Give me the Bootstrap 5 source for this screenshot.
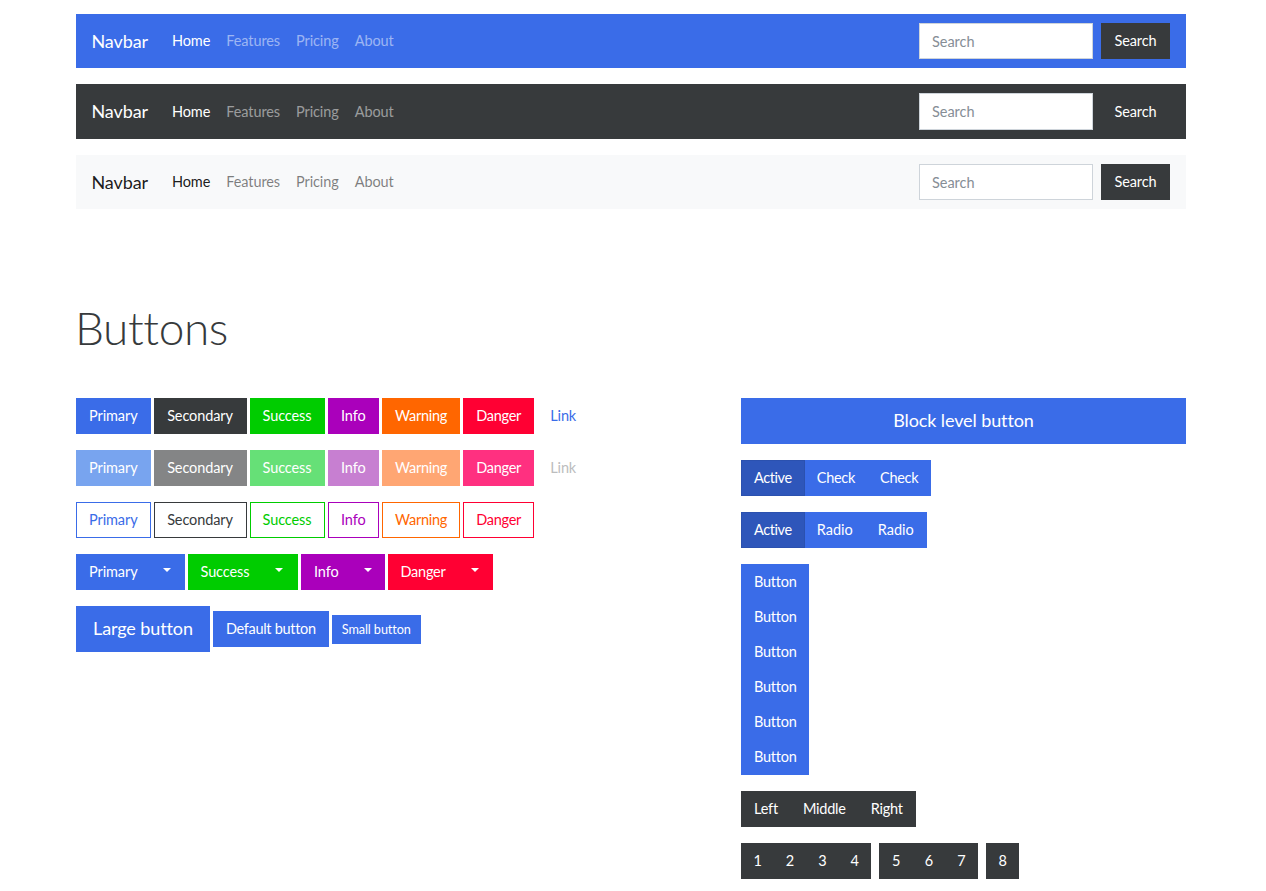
<!DOCTYPE html>
<html lang="en"><head><meta charset="utf-8"><title>Buttons</title>
<link href="https://cdn.jsdelivr.net/npm/bootstrap@5.3.0/dist/css/bootstrap.min.css" rel="stylesheet">
<style>
:root{--bs-primary-rgb:58,108,232;--bs-light-rgb:248,249,250;--bs-dark-rgb:55,58,60;--bs-border-radius:0;--bs-border-radius-sm:0;--bs-border-radius-lg:0;--bs-body-font-family:"Lato",sans-serif;--bs-body-color:#373a3c}
body{font-family:"Lato",sans-serif;font-size:14.5px;letter-spacing:-.1px;color:#373a3c}
.shell{width:1140px;max-width:none;margin-left:61px;padding:13.75px 15px 0}
.shell .navbar{padding:9px 16px;margin-bottom:16px}
.navbar-brand{font-size:18px;padding:0;margin-right:16px;margin-left:-.5px}
.navbar .nav-link{font-size:14.5px;padding:0 8px;line-height:22px}
.navbar-dark .navbar-nav .nav-link{--bs-nav-link-color:rgba(255,255,255,.5);color:rgba(255,255,255,.5)}
.navbar-dark .navbar-nav .nav-link.active{color:#fff}
.navbar-light .navbar-nav .nav-link{color:rgba(0,0,0,.5)}
.navbar-light .navbar-nav .nav-link.active{color:rgba(0,0,0,.9)}
.navbar-light .navbar-brand{color:rgba(0,0,0,.9)}
.navbar .form-control{width:174px;padding:7px 12px 5px;font-size:14.5px;line-height:22.5px;border-radius:0;border-color:#ced4da}
.navbar .form-control::placeholder{color:#868e96}
.navbar .btn{margin-left:8px;padding:0 12.5px;display:flex;align-items:center}
.section-title{font-size:46px;font-weight:300;line-height:1.2;color:#373a3c;letter-spacing:-.4px;margin:91.15px 0 42.4px -1px}
.gallery{--bs-gutter-x:30px}
.btn{--bs-btn-padding-x:12px;--bs-btn-padding-y:6px;--bs-btn-font-size:14.5px;--bs-btn-line-height:22px;--bs-btn-border-radius:0;--bs-btn-color:#fff;--bs-btn-hover-color:#fff;--bs-btn-active-color:#fff;--bs-btn-disabled-color:#fff;--bs-btn-disabled-opacity:1;letter-spacing:-.1px}
.btn-lg{--bs-btn-padding-x:16px;--bs-btn-font-size:18px;--bs-btn-line-height:28px;padding-top:7.5px;padding-bottom:8.5px}
.btn-sm{--bs-btn-padding-x:9px;--bs-btn-padding-y:4px;--bs-btn-font-size:12.7px;--bs-btn-line-height:19px}
.btn-primary{--bs-btn-bg:#3a6ce8;--bs-btn-border-color:#3a6ce8;--bs-btn-hover-bg:#3a6ce8;--bs-btn-hover-border-color:#3a6ce8;--bs-btn-active-bg:#2e56ba;--bs-btn-active-border-color:#2b51af;--bs-btn-disabled-bg:#78a4ef;--bs-btn-disabled-border-color:#78a4ef}
.btn-secondary{--bs-btn-bg:#373a3c;--bs-btn-border-color:#373a3c;--bs-btn-hover-bg:#373a3c;--bs-btn-hover-border-color:#373a3c;--bs-btn-disabled-bg:#848586;--bs-btn-disabled-border-color:#848586}
.btn-success{--bs-btn-bg:#00cc00;--bs-btn-border-color:#00cc00;--bs-btn-hover-bg:#00cc00;--bs-btn-hover-border-color:#00cc00;--bs-btn-disabled-bg:#66e077;--bs-btn-disabled-border-color:#66e077}
.btn-info{--bs-btn-bg:#aa00bb;--bs-btn-border-color:#aa00bb;--bs-btn-hover-bg:#aa00bb;--bs-btn-hover-border-color:#aa00bb;--bs-btn-disabled-bg:#c77fd1;--bs-btn-disabled-border-color:#c77fd1}
.btn-warning{--bs-btn-bg:#ff6600;--bs-btn-border-color:#ff6600;--bs-btn-hover-bg:#ff6600;--bs-btn-hover-border-color:#ff6600;--bs-btn-disabled-bg:#ffa673;--bs-btn-disabled-border-color:#ffa673}
.btn-danger{--bs-btn-bg:#ff0033;--bs-btn-border-color:#ff0033;--bs-btn-hover-bg:#ff0033;--bs-btn-hover-border-color:#ff0033;--bs-btn-disabled-bg:#ff3080;--bs-btn-disabled-border-color:#ff3080}
.btn-link{--bs-btn-color:#3a6ce8;--bs-btn-hover-color:#3a6ce8;--bs-btn-disabled-color:#bcbdbe;--bs-btn-border-color:transparent;text-decoration:none}
.btn-outline-primary{--bs-btn-color:#3a6ce8;--bs-btn-border-color:#3a6ce8}
.btn-outline-secondary{--bs-btn-color:#373a3c;--bs-btn-border-color:#373a3c}
.btn-outline-success{--bs-btn-color:#00cc00;--bs-btn-border-color:#00cc00}
.btn-outline-info{--bs-btn-color:#aa00bb;--bs-btn-border-color:#aa00bb}
.btn-outline-warning{--bs-btn-color:#ff6600;--bs-btn-border-color:#ff6600}
.btn-outline-danger{--bs-btn-color:#ff0033;--bs-btn-border-color:#ff0033}
.btn-strip{display:flex;gap:3px;margin-bottom:16px;align-items:center}
.btn-strip .btn-group{flex:none}
.btn-strip>.btn-secondary,.btn-strip>.btn-outline-secondary{min-width:93px}
.btn-strip>.btn-success,.btn-strip>.btn-outline-success{min-width:75px}
.btn-strip>.btn-info,.btn-strip>.btn-outline-info{min-width:51.5px}
.btn-strip .btn-warning,.btn-strip .btn-outline-warning,.btn-strip .btn-danger,.btn-strip .btn-outline-danger{letter-spacing:-.25px}
.btn-strip .btn-sm{margin-top:2px}
.dropdown-toggle-split{padding-left:12.5px;padding-right:12.5px}
.dropdown-toggle-split::after{position:relative;top:-1px}
.btn-success.dropdown-toggle-split{padding-right:14px}
.btn-info.dropdown-toggle-split{padding-right:11.5px}
.tight-default{letter-spacing:-.3px}
.tight-active{letter-spacing:-.4px}
.tight-check{letter-spacing:-.3px}
.tight-radio{letter-spacing:0}
.tight-stack{letter-spacing:-.25px}
.tight-align{letter-spacing:-.225px}
.group-line{display:block;margin-bottom:16px}
.pager-tools{gap:8px;margin-bottom:0}
.pager-tools .btn{padding-left:11.5px;padding-right:11.5px}
.pager-tools .btn-group:nth-child(2) .btn{padding-left:11.7px;padding-right:11.7px}
.pager-tools .btn-group:nth-child(3) .btn{padding-left:11.2px;padding-right:11.2px}
</style></head>
<body>
<div class="container shell">
  <nav class="navbar navbar-expand-lg navbar-dark bg-primary">
    <a class="navbar-brand" href="#">Navbar</a>
    <ul class="navbar-nav me-auto"><li class="nav-item"><a class="nav-link active" href="#">Home</a></li><li class="nav-item"><a class="nav-link" href="#">Features</a></li><li class="nav-item"><a class="nav-link" href="#">Pricing</a></li><li class="nav-item"><a class="nav-link" href="#">About</a></li></ul>
    <form class="d-flex"><input class="form-control" type="text" placeholder="Search"><button class="btn btn-secondary" type="button">Search</button></form>
  </nav>
  <nav class="navbar navbar-expand-lg navbar-dark bg-dark">
    <a class="navbar-brand" href="#">Navbar</a>
    <ul class="navbar-nav me-auto"><li class="nav-item"><a class="nav-link active" href="#">Home</a></li><li class="nav-item"><a class="nav-link" href="#">Features</a></li><li class="nav-item"><a class="nav-link" href="#">Pricing</a></li><li class="nav-item"><a class="nav-link" href="#">About</a></li></ul>
    <form class="d-flex"><input class="form-control" type="text" placeholder="Search"><button class="btn btn-secondary" type="button">Search</button></form>
  </nav>
  <nav class="navbar navbar-expand-lg navbar-light bg-light">
    <a class="navbar-brand" href="#">Navbar</a>
    <ul class="navbar-nav me-auto"><li class="nav-item"><a class="nav-link active" href="#">Home</a></li><li class="nav-item"><a class="nav-link" href="#">Features</a></li><li class="nav-item"><a class="nav-link" href="#">Pricing</a></li><li class="nav-item"><a class="nav-link" href="#">About</a></li></ul>
    <form class="d-flex"><input class="form-control" type="text" placeholder="Search"><button class="btn btn-secondary" type="button">Search</button></form>
  </nav>

  <h1 class="section-title">Buttons</h1>

  <div class="row gallery">
    <div class="col-7">
      <div class="btn-strip">
        <button type="button" class="btn btn-primary">Primary</button><button type="button" class="btn btn-secondary">Secondary</button><button type="button" class="btn btn-success">Success</button><button type="button" class="btn btn-info">Info</button><button type="button" class="btn btn-warning">Warning</button><button type="button" class="btn btn-danger">Danger</button><button type="button" class="btn btn-link">Link</button>
      </div>
      <div class="btn-strip">
        <button type="button" class="btn btn-primary" disabled>Primary</button><button type="button" class="btn btn-secondary" disabled>Secondary</button><button type="button" class="btn btn-success" disabled>Success</button><button type="button" class="btn btn-info" disabled>Info</button><button type="button" class="btn btn-warning" disabled>Warning</button><button type="button" class="btn btn-danger" disabled>Danger</button><button type="button" class="btn btn-link" disabled>Link</button>
      </div>
      <div class="btn-strip">
        <button type="button" class="btn btn-outline-primary">Primary</button><button type="button" class="btn btn-outline-secondary">Secondary</button><button type="button" class="btn btn-outline-success">Success</button><button type="button" class="btn btn-outline-info">Info</button><button type="button" class="btn btn-outline-warning">Warning</button><button type="button" class="btn btn-outline-danger">Danger</button>
      </div>
      <div class="btn-strip">
        <div class="btn-group"><button type="button" class="btn btn-primary">Primary</button><button type="button" class="btn btn-primary dropdown-toggle dropdown-toggle-split" data-bs-toggle="dropdown" aria-label="Toggle"></button><div class="dropdown-menu"><a class="dropdown-item" href="#">Action</a></div></div>
        <div class="btn-group"><button type="button" class="btn btn-success">Success</button><button type="button" class="btn btn-success dropdown-toggle dropdown-toggle-split" data-bs-toggle="dropdown" aria-label="Toggle"></button><div class="dropdown-menu"><a class="dropdown-item" href="#">Action</a></div></div>
        <div class="btn-group"><button type="button" class="btn btn-info">Info</button><button type="button" class="btn btn-info dropdown-toggle dropdown-toggle-split" data-bs-toggle="dropdown" aria-label="Toggle"></button><div class="dropdown-menu"><a class="dropdown-item" href="#">Action</a></div></div>
        <div class="btn-group"><button type="button" class="btn btn-danger">Danger</button><button type="button" class="btn btn-danger dropdown-toggle dropdown-toggle-split" data-bs-toggle="dropdown" aria-label="Toggle"></button><div class="dropdown-menu"><a class="dropdown-item" href="#">Action</a></div></div>
      </div>
      <div class="btn-strip">
        <button type="button" class="btn btn-primary btn-lg">Large button</button><button type="button" class="btn btn-primary tight-default">Default button</button><button type="button" class="btn btn-primary btn-sm">Small button</button>
      </div>
    </div>
    <div class="col-5">
      <div class="d-grid mb-3"><button type="button" class="btn btn-primary btn-lg">Block level button</button></div>
      <div class="group-line"><div class="btn-group">
        <input type="checkbox" class="btn-check" id="c1" checked autocomplete="off"><label class="btn btn-primary tight-active" for="c1">Active</label>
        <input type="checkbox" class="btn-check" id="c2" autocomplete="off"><label class="btn btn-primary tight-check" for="c2">Check</label>
        <input type="checkbox" class="btn-check" id="c3" autocomplete="off"><label class="btn btn-primary tight-check" for="c3">Check</label>
      </div></div>
      <div class="group-line"><div class="btn-group">
        <input type="radio" class="btn-check" name="r" id="r1" checked autocomplete="off"><label class="btn btn-primary tight-active" for="r1">Active</label>
        <input type="radio" class="btn-check" name="r" id="r2" autocomplete="off"><label class="btn btn-primary tight-radio" for="r2">Radio</label>
        <input type="radio" class="btn-check" name="r" id="r3" autocomplete="off"><label class="btn btn-primary tight-radio" for="r3">Radio</label>
      </div></div>
      <div class="group-line"><div class="btn-group-vertical">
        <button type="button" class="btn btn-primary tight-stack">Button</button><button type="button" class="btn btn-primary tight-stack">Button</button><button type="button" class="btn btn-primary tight-stack">Button</button><button type="button" class="btn btn-primary tight-stack">Button</button><button type="button" class="btn btn-primary tight-stack">Button</button><button type="button" class="btn btn-primary tight-stack">Button</button>
      </div></div>
      <div class="group-line"><div class="btn-group">
        <button type="button" class="btn btn-secondary tight-align">Left</button><button type="button" class="btn btn-secondary tight-align">Middle</button><button type="button" class="btn btn-secondary tight-align">Right</button>
      </div></div>
      <div class="btn-toolbar pager-tools">
        <div class="btn-group"><button type="button" class="btn btn-secondary">1</button><button type="button" class="btn btn-secondary">2</button><button type="button" class="btn btn-secondary">3</button><button type="button" class="btn btn-secondary">4</button></div>
        <div class="btn-group"><button type="button" class="btn btn-secondary">5</button><button type="button" class="btn btn-secondary">6</button><button type="button" class="btn btn-secondary">7</button></div>
        <div class="btn-group"><button type="button" class="btn btn-secondary">8</button></div>
      </div>
    </div>
  </div>
</div>
<script src="https://cdn.jsdelivr.net/npm/bootstrap@5.3.0/dist/js/bootstrap.bundle.min.js"></script>
</body></html>
